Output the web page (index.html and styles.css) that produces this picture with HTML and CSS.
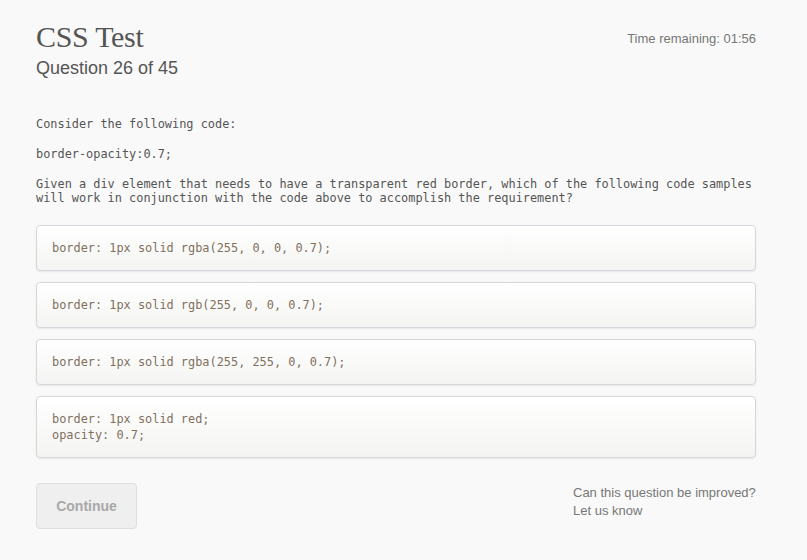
FILE: index.html
```html
<!DOCTYPE html>
<html>
<head>
<meta charset="utf-8">
<link rel="stylesheet" href="styles.css">
</head>
<body>
<div class="page">
  <header class="header">
    <div class="titles">
      <h1 class="title">CSS Test</h1>
      <div class="subtitle">Question 26 of 45</div>
    </div>
    <div class="timer">Time remaining: 01:56</div>
  </header>
  <div class="question">
    <p class="q-line">Consider the following code:</p>
    <p class="q-line">border-opacity:0.7;</p>
    <p class="q-line">Given a div element that needs to have a transparent red border, which of the following code samples will work in conjunction with the code above to accomplish the requirement?</p>
  </div>
  <div class="options">
    <div class="option">border: 1px solid rgba(255, 0, 0, 0.7);</div>
    <div class="option">border: 1px solid rgb(255, 0, 0, 0.7);</div>
    <div class="option">border: 1px solid rgba(255, 255, 0, 0.7);</div>
    <div class="option">border: 1px solid red;<br>opacity: 0.7;</div>
  </div>
  <div class="footer">
    <button class="continue">Continue</button>
    <div class="feedback">
      <div>Can this question be improved?</div>
      <div>Let us know</div>
    </div>
  </div>
</div>
</body>
</html>
```
FILE: styles.css
```css
html, body {
  margin: 0;
  padding: 0;
  background: #f9f9f9;
}
.page {
  width: 720px;
  margin-left: 36px;
  padding-top: 20px;
  font-family: "Liberation Sans", Arial, sans-serif;
  color: #666;
}
.header {
  display: flex;
  justify-content: space-between;
  align-items: flex-start;
}
.title {
  margin: 0;
  font-family: "Liberation Serif", serif;
  font-weight: normal;
  font-size: 30px;
  line-height: 34px;
  color: #555;
  letter-spacing: -0.3px;
}
.subtitle {
  font-size: 18px;
  line-height: 22px;
  margin-top: 3px;
  color: #555;
}
.timer {
  font-size: 13px;
  line-height: 16px;
  margin-top: 11px;
  color: #777;
}
.question {
  margin-top: 38px;
  font-family: "DejaVu Sans Mono", monospace;
  font-size: 11.9px;
  line-height: 14px;
  color: #555;
}
.q-line {
  margin: 0 0 16px 0;
}
.q-line:last-child {
  margin-bottom: 0;
}
.options {
  display: flex;
  flex-direction: column;
  gap: 11px;
  margin-top: 20px;
}
.option {
  border: 1px solid #d6d6dc;
  border-radius: 4px;
  background: linear-gradient(#ffffff, #f4f4f2);
  box-shadow: 0 1px 2px rgba(0,0,0,0.08);
  padding: 14px 15px;
  font-family: "DejaVu Sans Mono", monospace;
  font-size: 11.9px;
  line-height: 16px;
  color: #80705f;
}
.footer {
  display: flex;
  justify-content: space-between;
  align-items: flex-start;
  margin-top: 25px;
}
.continue {
  width: 101px;
  height: 46px;
  border: 1px solid #dedede;
  border-radius: 4px;
  background: #efefef;
  color: #a8a8a8;
  font-family: "Liberation Sans", Arial, sans-serif;
  font-weight: bold;
  font-size: 14px;
  padding: 0;
}
.feedback {
  font-size: 13px;
  line-height: 18px;
  color: #777;
  padding-top: 1px;
  width: 183px;
}
```
